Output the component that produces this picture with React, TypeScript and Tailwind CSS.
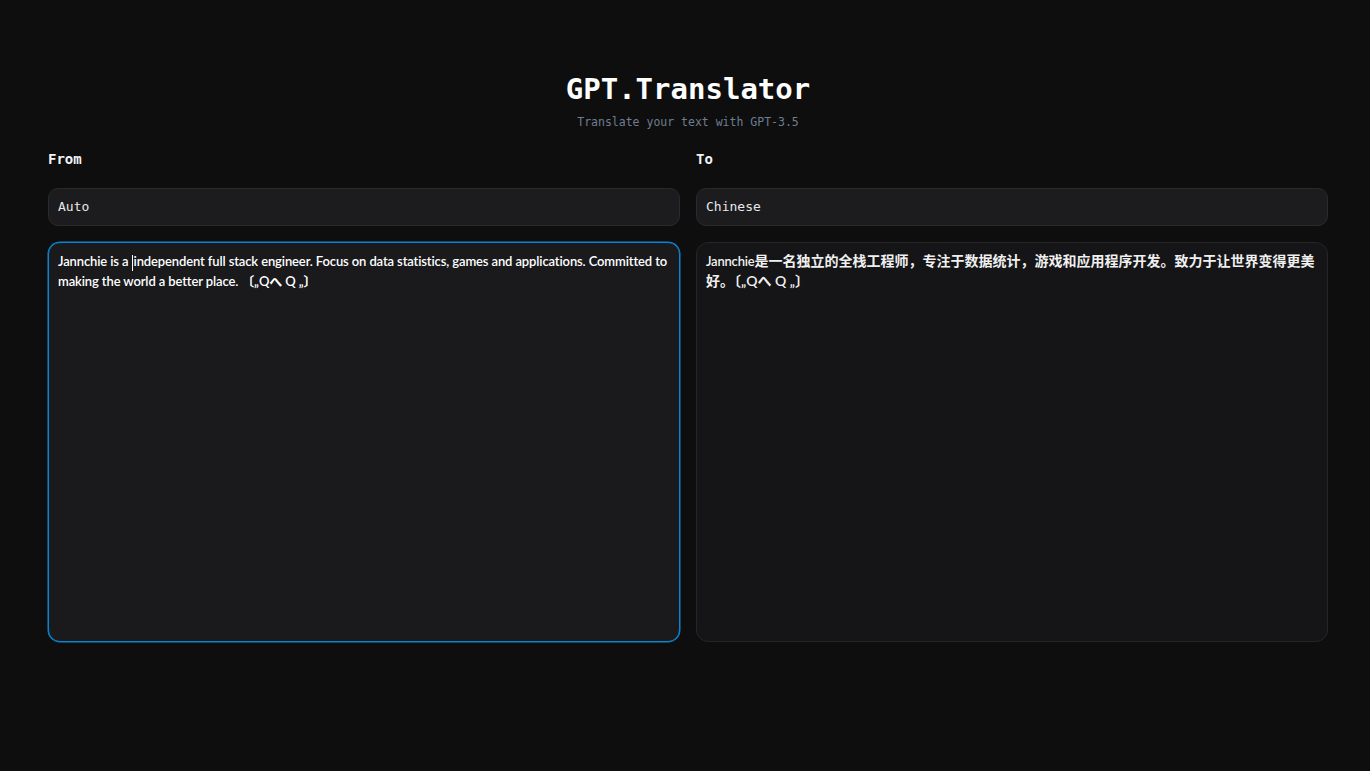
import React from "react";

const mono = { fontFamily: '"DejaVu Sans Mono", "Liberation Mono", monospace' };
const body = { fontFamily: 'Lato, "Noto Sans CJK SC", sans-serif' };

export default function App() {
  return (
    <div className="min-h-[771px] w-full bg-[#0e0e0e] text-white pl-12 pr-[42px] pt-[70px]">
      <div className="flex flex-col items-center" style={mono}>
        <h1 className="text-[29px] leading-[38px] font-bold text-white">GPT.Translator</h1>
        <p className="text-[11.5px] leading-[16px] text-[#6f7d92] mt-[6px]">Translate your text with GPT-3.5</p>
      </div>
      <div className="grid grid-cols-2 gap-4 mt-[19px]">
        <div className="flex flex-col">
          <div className="text-[14px] leading-[20px] font-bold text-[#f2f2f2]" style={mono}>From</div>
          <div className="mt-[19px] h-[38px] rounded-[10px] border border-[#2a2a2d] bg-[#1c1c1f] px-[9px] flex items-center text-[13px] text-[#e8e8e8]" style={mono}>Auto</div>
          <div className="mt-[16px] h-[400px] rounded-[12px] border border-[#0a84d0] ring-[0.5px] ring-[#0a84d0] bg-[#1a1a1d] px-[9px] pt-[8px] text-[13px] leading-[20px] font-semibold text-white tracking-[-0.12px]" style={body}>
            Jannchie is a{" "}<span className="inline-block w-px h-[16px] bg-white align-middle mr-[1px]"></span>independent full stack engineer. Focus on data statistics, games and applications. Committed to making the world a better place. 〔„Qへ Q „〕
          </div>
        </div>
        <div className="flex flex-col">
          <div className="text-[14px] leading-[20px] font-bold text-[#f2f2f2]" style={mono}>To</div>
          <div className="mt-[19px] h-[38px] rounded-[10px] border border-[#2a2a2d] bg-[#1c1c1f] px-[9px] flex items-center text-[13px] text-[#e8e8e8]" style={mono}>Chinese</div>
          <div className="mt-[16px] h-[400px] rounded-[12px] border border-[#262628] bg-[#151517] px-[9px] pt-[8px] text-[14px] leading-[20px] font-semibold text-[#f0f0f0]" style={body}>
            <span className="text-[13px] tracking-[-0.2px]">Jannchie</span>是一名独立的全栈工程师，专注于数据统计，游戏和应用程序开发。致力于让世界变得更美好。〔„Qへ Q „〕
          </div>
        </div>
      </div>
    </div>
  );
}
